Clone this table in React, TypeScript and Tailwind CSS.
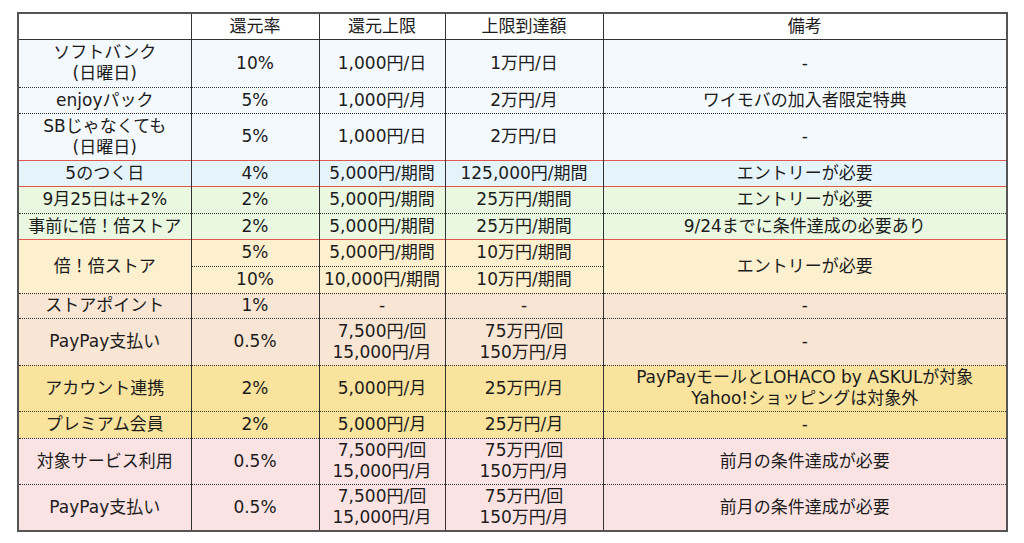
import React from "react";

type Row = {
  name?: string[];
  nameSpan?: number;
  rate: string;
  cap: string[];
  limit: string[];
  note?: string[];
  noteSpan?: number;
  h: string;
  bg: string;
  top: "red" | "dash" | "solid";
};

const rows: Row[] = [
  { name: ["ソフトバンク", "(日曜日)"], rate: "10%", cap: ["1,000円/日"], limit: ["1万円/日"], note: ["-"], h: "h-[48px]", bg: "bg-[#f4f9fd]", top: "solid" },
  { name: ["enjoyパック"], rate: "5%", cap: ["1,000円/月"], limit: ["2万円/月"], note: ["ワイモバの加入者限定特典"], h: "h-[26px]", bg: "bg-[#f4f9fd]", top: "dash" },
  { name: ["SBじゃなくても", "(日曜日)"], rate: "5%", cap: ["1,000円/日"], limit: ["2万円/日"], note: ["-"], h: "h-[47px]", bg: "bg-[#f4f9fd]", top: "dash" },
  { name: ["5のつく日"], rate: "4%", cap: ["5,000円/期間"], limit: ["125,000円/期間"], note: ["エントリーが必要"], h: "h-[26px]", bg: "bg-[#e5f3fa]", top: "red" },
  { name: ["9月25日は+2%"], rate: "2%", cap: ["5,000円/期間"], limit: ["25万円/期間"], note: ["エントリーが必要"], h: "h-[27px]", bg: "bg-[#eaf8e1]", top: "red" },
  { name: ["事前に倍！倍ストア"], rate: "2%", cap: ["5,000円/期間"], limit: ["25万円/期間"], note: ["9/24までに条件達成の必要あり"], h: "h-[26px]", bg: "bg-[#eaf8e1]", top: "dash" },
  { name: ["倍！倍ストア"], nameSpan: 2, rate: "5%", cap: ["5,000円/期間"], limit: ["10万円/期間"], note: ["エントリーが必要"], noteSpan: 2, h: "h-[27px]", bg: "bg-[#fcf0ce]", top: "red" },
  { rate: "10%", cap: ["10,000円/期間"], limit: ["10万円/期間"], h: "h-[27px]", bg: "bg-[#fcf0ce]", top: "dash" },
  { name: ["ストアポイント"], rate: "1%", cap: ["-"], limit: ["-"], note: ["-"], h: "h-[25px]", bg: "bg-[#f8e5d3]", top: "dash" },
  { name: ["PayPay支払い"], rate: "0.5%", cap: ["7,500円/回", "15,000円/月"], limit: ["75万円/回", "150万円/月"], note: ["-"], h: "h-[47px]", bg: "bg-[#f8e5d3]", top: "dash" },
  { name: ["アカウント連携"], rate: "2%", cap: ["5,000円/月"], limit: ["25万円/月"], note: ["PayPayモールとLOHACO by ASKULが対象", "Yahoo!ショッピングは対象外"], h: "h-[46px]", bg: "bg-[#f9e39d]", top: "dash" },
  { name: ["プレミアム会員"], rate: "2%", cap: ["5,000円/月"], limit: ["25万円/月"], note: ["-"], h: "h-[27px]", bg: "bg-[#f9e39d]", top: "dash" },
  { name: ["対象サービス利用"], rate: "0.5%", cap: ["7,500円/回", "15,000円/月"], limit: ["75万円/回", "150万円/月"], note: ["前月の条件達成が必要"], h: "h-[46px]", bg: "bg-[#fbe3e3]", top: "dash" },
  { name: ["PayPay支払い"], rate: "0.5%", cap: ["7,500円/回", "15,000円/月"], limit: ["75万円/回", "150万円/月"], note: ["前月の条件達成が必要"], h: "h-[47px]", bg: "bg-[#fbe3e3]", top: "dash" },
];

const topCls = {
  red: "border-t border-t-[#e2574b] [border-top-style:solid]",
  dash: "border-t border-t-[#333] [border-top-style:dotted]",
  solid: "border-t border-t-[#333] [border-top-style:solid]",
};

function Lines({ lines }: { lines: string[] }) {
  return (
    <>
      {lines.map((l, i) => (
        <div key={i}>{l}</div>
      ))}
    </>
  );
}

export default function App() {
  const cell = "border-x border-x-[#333] text-center align-middle p-0 whitespace-nowrap";
  return (
    <div
      className="min-h-screen bg-white pt-[12px] pl-[17px]"
      style={{ fontFamily: '"DejaVu Sans", "Noto Sans CJK JP", sans-serif' }}
    >
      <table className="w-[991px] table-fixed border-collapse border-2 border-[#555] text-[17px] leading-[21px] text-[#1c1c1c]">
        <colgroup>
          <col className="w-[173px]" />
          <col className="w-[128px]" />
          <col className="w-[126px]" />
          <col className="w-[158px]" />
          <col />
        </colgroup>
        <thead>
          <tr className="h-[26px] bg-white">
            <th className={`${cell} font-normal`}></th>
            <th className={`${cell} font-normal`}>還元率</th>
            <th className={`${cell} font-normal`}>還元上限</th>
            <th className={`${cell} font-normal`}>上限到達額</th>
            <th className={`${cell} font-normal`}>備考</th>
          </tr>
        </thead>
        <tbody>
          {rows.map((r, i) => {
            const t = topCls[r.top];
            return (
              <tr key={i} className={`${r.h} ${r.bg}`}>
                {r.name && (
                  <td rowSpan={r.nameSpan} className={`${cell} ${t}`}>
                    <Lines lines={r.name} />
                  </td>
                )}
                <td className={`${cell} ${t}`}>{r.rate}</td>
                <td className={`${cell} ${t}`}>
                  <Lines lines={r.cap} />
                </td>
                <td className={`${cell} ${t}`}>
                  <Lines lines={r.limit} />
                </td>
                {r.note && (
                  <td rowSpan={r.noteSpan} className={`${cell} ${t}`}>
                    <Lines lines={r.note} />
                  </td>
                )}
              </tr>
            );
          })}
        </tbody>
      </table>
    </div>
  );
}
